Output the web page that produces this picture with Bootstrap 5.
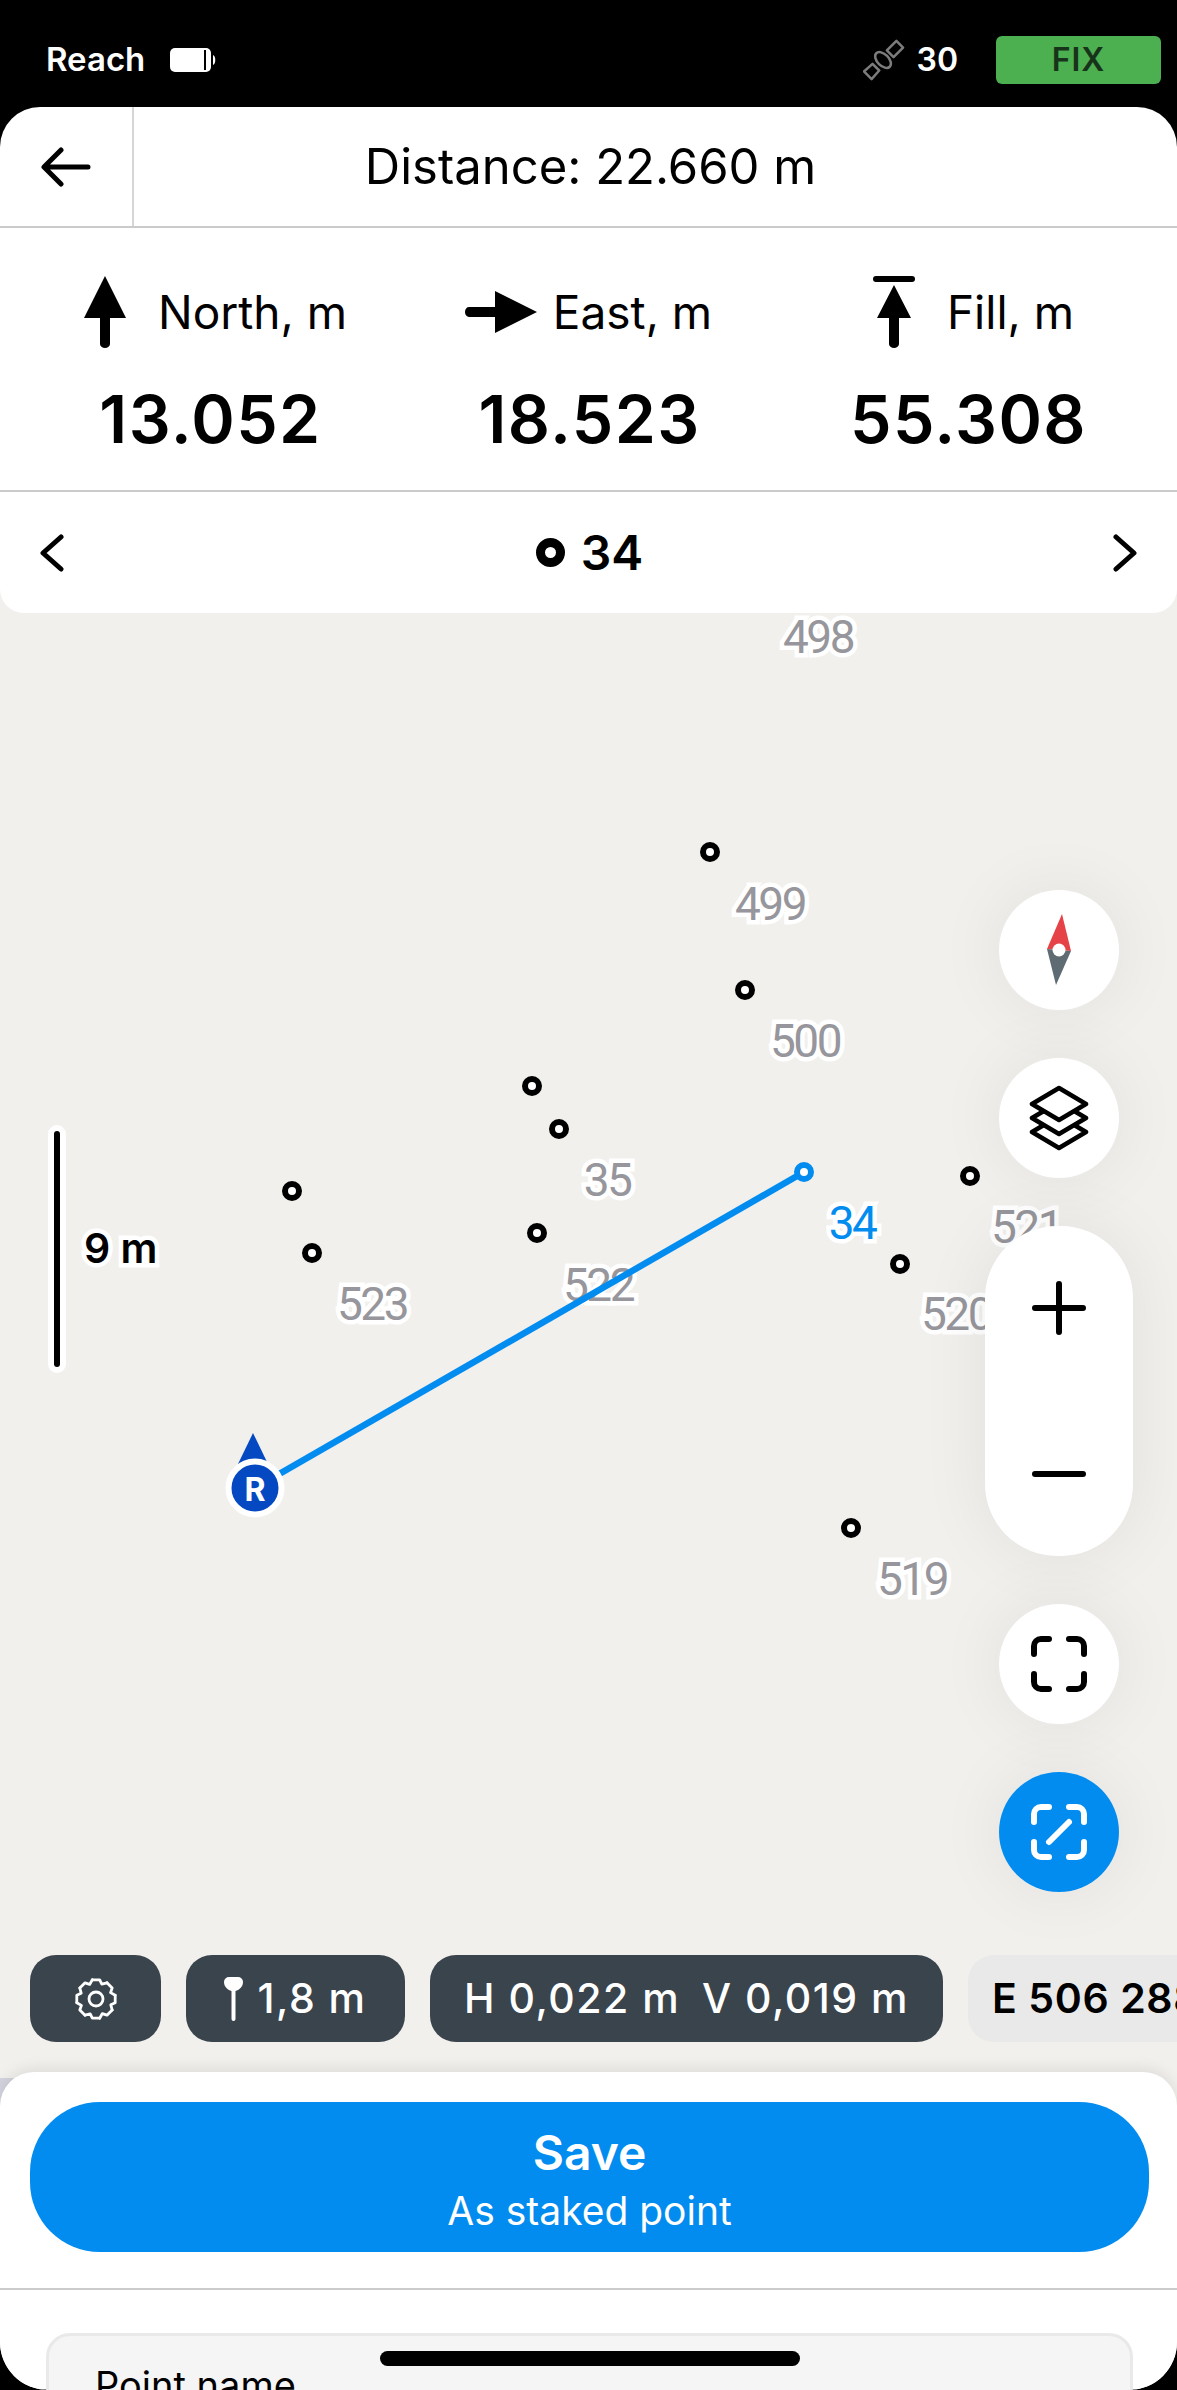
<!DOCTYPE html>
<html lang="en">
<head>
<meta charset="utf-8">
<title>Stakeout</title>
<link href="https://cdn.jsdelivr.net/npm/bootstrap@5.3.0/dist/css/bootstrap.min.css" rel="stylesheet">
<style>
html,body{height:100%;margin:0;background:#000;}
body{font-family:Inter,"Liberation Sans",sans-serif;color:#000;}
.app-screen{width:1177px;height:2390px;overflow:hidden;background:#000;position:relative;border-radius:0 0 48px 48px;}
.status-strip{height:107px;padding:12px 16px 0 46px;color:#fff;font-weight:600;font-size:33px;}
.fix-tag{width:165px;height:48px;background:#4caf50;color:#17331a;border-radius:6px;font-size:32px;font-weight:600;letter-spacing:1px;margin-left:38px;}
.sat-num{margin-left:12px;font-size:32px;}
.batt{margin-left:25px;}
.top-panel{background:#fff;border-radius:40px 40px 24px 24px;position:relative;z-index:3;margin-bottom:-24px;}
.head-row{height:121px;border-bottom:2px solid #cbcbcb;}
.back-cell{width:134px;height:100%;border-right:2px solid #d6d6d6;}
.head-title{font-size:49px;padding-right:130px;}
.stat-row{height:264px;border-bottom:2px solid #cbcbcb;padding:0 20px;}
.stat-label{font-size:46px;height:72px;gap:32px;margin-top:48px;}
.stat-label.tight-gap{gap:16px;}
.stat-label.shift-r{padding-left:12px;}
.stat-value{font-size:66px;font-weight:600;line-height:1;margin-top:38px;letter-spacing:1.4px;padding-left:2px;}
.nav-row{height:121px;padding:0 39px;}
.nav-point{font-size:48px;font-weight:600;gap:16px;padding-left:2px;}
.ring{display:block;width:29px;height:29px;border:9px solid #000;border-radius:50%;}
.map-area{position:relative;height:1801px;background:#f1f0ed;overflow:hidden;}
.pt{position:absolute;width:20px;height:20px;margin:-10px 0 0 -10px;border:6px solid #000;border-radius:50%;background:#fff;}
.pt-blue{border-color:#038cef;}
.lbl{position:absolute;transform:translate(-50%,-50%);font-family:Roboto,sans-serif;font-size:46px;line-height:1;letter-spacing:-2.5px;color:#96969c;-webkit-text-stroke:9px #fff;paint-order:stroke fill;}
.lbl-blue{color:#038cef;}
.r-letter{position:absolute;left:255px;top:901px;transform:translate(-50%,-50%);color:#fff;font-size:32px;font-weight:700;line-height:1;}
.map-svg{position:absolute;left:0;top:0;width:1177px;height:1801px;}
.scale-txt{position:absolute;left:84px;font-size:41px;font-weight:600;line-height:1;-webkit-text-stroke:9px #fff;paint-order:stroke fill;}
.side-tools{position:absolute;right:44px;gap:48px;width:148px;}
.round-tool{width:120px;height:120px;border-radius:50%;background:#fff;box-shadow:0 0 70px rgba(0,0,0,.07);}
.round-tool.active{background:#038cef;}
.zoom-pill{width:148px;height:330px;border-radius:72px;background:#fff;box-shadow:0 0 70px rgba(0,0,0,.07);padding:55px 0;}
.chips{position:absolute;left:30px;gap:25px;white-space:nowrap;}
.chip-box{height:87px;border-radius:26px;background:#3a444c;color:#fff;font-size:41px;font-weight:500;letter-spacing:1.5px;flex:none;}
.chip-light{background:#e9e9e9;color:#000;width:400px;padding-left:24px;font-weight:600;letter-spacing:.6px;}
.back-sheet{position:absolute;left:0;top:1489px;width:40px;height:70px;background:#d3d3de;}
.sheet{position:absolute;left:0;right:0;top:2072px;bottom:0;background:#fff;border-radius:34px 34px 0 0;border-bottom:1px solid #777;box-shadow:0 -4px 14px rgba(0,0,0,.08);z-index:4;}
.save-btn{width:1119px;height:150px;margin:30px 30px 36px;background:#038cef;color:#fff;border:0;border-radius:70px;padding:10px 0 0;}
.save-main{font-size:48px;font-weight:600;display:block;line-height:54px;}
.save-sub{font-size:39px;display:block;line-height:54px;margin-top:4px;}
.sheet-rule{border-top:2px solid #cbcbcb;}
.input-box{margin:43px 44px 0 46px;height:200px;background:#f5f5f5;border:3px solid #e9e9e9;border-radius:24px;padding:27px 46px;font-size:38px;line-height:44px;}
.home-bar{position:absolute;left:380px;top:2351px;width:420px;height:15px;border-radius:8px;background:#000;z-index:5;}
</style>
</head>
<body>
<div class="app-screen">
  <div class="status-strip d-flex align-items-center">
    <span>Reach</span>
    <svg class="batt" width="47" height="26" viewBox="0 0 47 26"><rect x="0" y="1" width="41" height="24" rx="5" fill="#fff"/><rect x="34" y="3" width="2" height="20" fill="#000"/><path d="M43 8c3 1 3 9 0 10z" fill="#fff"/></svg>
    <span class="ms-auto d-flex align-items-center">
      <svg width="42" height="42" viewBox="8 6 44 44" fill="none" stroke="#7c7c7c" stroke-width="2.600" stroke-linejoin="round"><path d="M43 8l7 7-10 10-7-7z"/><path d="M18 32l7 7-8 9-8-8z"/><ellipse cx="29" cy="28" rx="10" ry="6" transform="rotate(45 29 28)"/></svg>
      <span class="sat-num">30</span>
    </span>
    <span class="fix-tag d-flex align-items-center justify-content-center">FIX</span>
  </div>

  <div class="top-panel">
    <div class="head-row d-flex align-items-center">
      <div class="back-cell d-flex align-items-center justify-content-center">
        <svg width="50" height="40" viewBox="0 0 50 40" fill="none" stroke="#000" stroke-width="5" stroke-linecap="round" stroke-linejoin="round"><path d="M47 20H4M20 3L3 20l17 17"/></svg>
      </div>
      <div class="head-title flex-grow-1 text-center">Distance: 22.660 m</div>
    </div>

    <div class="stat-row row g-0">
      <div class="col-4 text-center">
        <div class="stat-label shift-r d-flex align-items-center justify-content-center">
          <svg width="42" height="72" viewBox="0 0 42 72"><path d="M21 0L42 42H26V68a5 4 0 0 1-10 0V42H0z" fill="#000"/></svg>
          <span>North, m</span>
        </div>
        <div class="stat-value">13.052</div>
      </div>
      <div class="col-4 text-center">
        <div class="stat-label tight-gap d-flex align-items-center justify-content-center">
          <svg width="72" height="42" viewBox="0 0 72 42"><path d="M72 21L30 42V26H4a4 5 0 0 1 0-10H30V0z" fill="#000"/></svg>
          <span>East, m</span>
        </div>
        <div class="stat-value">18.523</div>
      </div>
      <div class="col-4 text-center">
        <div class="stat-label shift-r d-flex align-items-center justify-content-center">
          <svg width="42" height="72" viewBox="0 0 42 72"><rect x="0" y="0" width="42" height="6" rx="3" fill="#000"/><path d="M21 9L38 42H26V68a5 4 0 0 1-10 0V42H4z" fill="#000"/></svg>
          <span>Fill, m</span>
        </div>
        <div class="stat-value">55.308</div>
      </div>
    </div>

    <div class="nav-row d-flex align-items-center justify-content-between">
      <svg width="26" height="38" viewBox="0 0 26 38" fill="none" stroke="#000" stroke-width="5" stroke-linecap="round" stroke-linejoin="round"><path d="M22 3L4 19l18 16"/></svg>
      <div class="nav-point d-flex align-items-center"><span class="ring"></span><span>34</span></div>
      <svg width="26" height="38" viewBox="0 0 26 38" fill="none" stroke="#000" stroke-width="5" stroke-linecap="round" stroke-linejoin="round"><path d="M4 3l18 16L4 35"/></svg>
    </div>
  </div>

  <div class="map-area">
    <div class="back-sheet"></div>
    <svg class="map-svg" viewBox="0 589 1177 1801">
      <rect x="48" y="1125" width="18" height="248" rx="9" fill="#fff"/>
      <rect x="54" y="1131" width="6" height="236" rx="3" fill="#000"/>
    </svg>
    <span class="scale-txt" style="top:639px">9 m</span>
    <span class="lbl" style="left:818px;top:48px">498</span>
    <span class="lbl" style="left:770px;top:315px">499</span>
    <span class="lbl" style="left:805px;top:452px">500</span>
    <span class="lbl" style="left:607px;top:591px">35</span>
    <span class="lbl lbl-blue" style="left:852px;top:634px">34</span>
    <span class="lbl" style="left:598px;top:696px">522</span>
    <span class="lbl" style="left:372px;top:715px">523</span>
    <span class="lbl" style="left:1026px;top:638px">521</span>
    <span class="lbl" style="left:956px;top:725px">520</span>
    <span class="lbl" style="left:912px;top:990px">519</span>
    <svg class="map-svg" viewBox="0 589 1177 1801">
      <path d="M255 1488L804 1172" stroke="#038cef" stroke-width="6.500" fill="none"/>
      <path d="M253 1433L268 1464 238 1464z" fill="#0449c2"/>
      <circle cx="255" cy="1488" r="26.500" fill="#0449c2" stroke="#fff" stroke-width="6"/>
    </svg>
    <span class="pt" style="left:710px;top:263px"></span>
    <span class="pt" style="left:745px;top:401px"></span>
    <span class="pt" style="left:532px;top:497px"></span>
    <span class="pt" style="left:559px;top:540px"></span>
    <span class="pt" style="left:537px;top:644px"></span>
    <span class="pt" style="left:292px;top:602px"></span>
    <span class="pt" style="left:312px;top:664px"></span>
    <span class="pt" style="left:970px;top:587px"></span>
    <span class="pt" style="left:900px;top:675px"></span>
    <span class="pt" style="left:851px;top:939px"></span>
    <span class="pt pt-blue" style="left:804px;top:583px"></span>
    <span class="r-letter">R</span>

    <div class="side-tools d-flex flex-column align-items-center" style="top:301px">
      <div class="round-tool d-flex align-items-center justify-content-center">
        <svg width="120" height="120" viewBox="0 0 120 120"><path d="M63 24L72 61 48 59z" fill="#e54347"/><path d="M48 59L72 61 57 95z" fill="#5f6b73"/><circle cx="60" cy="60" r="6.500" fill="#fff"/></svg>
      </div>
      <div class="round-tool d-flex align-items-center justify-content-center">
        <svg width="60" height="66" viewBox="0 0 60 66" fill="#fff" stroke="#000" stroke-width="4.500" stroke-linejoin="round"><path d="M30 31L3 47l27 16 27-16z"/><path d="M30 17L3 33l27 16 27-16z"/><path d="M30 3L3 19l27 16 27-16z"/></svg>
      </div>
      <div class="zoom-pill d-flex flex-column align-items-center justify-content-between">
        <svg width="54" height="54" viewBox="0 0 54 54" stroke="#000" stroke-width="6" stroke-linecap="round"><path d="M27 3v48M3 27h48"/></svg>
        <svg width="54" height="54" viewBox="0 0 54 54" stroke="#000" stroke-width="6" stroke-linecap="round"><path d="M3 27h48"/></svg>
      </div>
      <div class="round-tool d-flex align-items-center justify-content-center">
        <svg width="56" height="56" viewBox="0 0 56 56" fill="none" stroke="#000" stroke-width="6" stroke-linecap="round"><path d="M3 18V10a7 7 0 0 1 7-7h8M38 3h8a7 7 0 0 1 7 7v8M53 38v8a7 7 0 0 1-7 7h-8M18 53h-8a7 7 0 0 1-7-7v-8"/></svg>
      </div>
      <div class="round-tool active d-flex align-items-center justify-content-center">
        <svg width="56" height="56" viewBox="0 0 56 56" fill="none" stroke="#fff" stroke-width="6" stroke-linecap="round"><path d="M3 18V10a7 7 0 0 1 7-7h8M38 3h8a7 7 0 0 1 7 7v8M53 38v8a7 7 0 0 1-7 7h-8M18 53h-8a7 7 0 0 1-7-7v-8M18 38l20-20"/></svg>
      </div>
    </div>

    <div class="chips d-flex" style="top:1366px">
      <div class="chip-box d-flex align-items-center justify-content-center" style="width:131px">
        <svg width="44" height="44" viewBox="-22 -22 44 44" fill="none" stroke="#fff" stroke-width="2.800" stroke-linejoin="round" stroke-linecap="round">
          <circle r="7"/>
          <path id="gear-seg" d="M-3.700-19.200H3.700L5.800-14.800 11-16.200"/>
          <use href="#gear-seg" transform="rotate(45)"/>
          <use href="#gear-seg" transform="rotate(90)"/>
          <use href="#gear-seg" transform="rotate(135)"/>
          <use href="#gear-seg" transform="rotate(180)"/>
          <use href="#gear-seg" transform="rotate(225)"/>
          <use href="#gear-seg" transform="rotate(270)"/>
          <use href="#gear-seg" transform="rotate(315)"/>
        </svg>
      </div>
      <div class="chip-box d-flex align-items-center justify-content-center" style="width:219px;gap:14px">
        <svg width="19" height="44" viewBox="0 0 19 44"><path d="M5 0h9a5 5 0 0 1 5 5c0 5-4 8-7.500 9v28a2 2 0 0 1-4 0V14C4 13 0 10 0 5a5 5 0 0 1 5-5z" fill="#fff"/></svg>
        <span>1,8 m</span>
      </div>
      <div class="chip-box d-flex align-items-center justify-content-center" style="width:513px;gap:22px">
        <span>H 0,022 m</span><span>V 0,019 m</span>
      </div>
      <div class="chip-box chip-light d-flex align-items-center">E 506 288,112 m</div>
    </div>
  </div>

  <div class="sheet">
    <button type="button" class="save-btn d-block">
      <span class="save-main">Save</span>
      <span class="save-sub">As staked point</span>
    </button>
    <div class="sheet-rule"></div>
    <div class="input-box">Point name</div>
  </div>
  <div class="home-bar"></div>
</div>
<script src="https://cdn.jsdelivr.net/npm/bootstrap@5.3.0/dist/js/bootstrap.bundle.min.js"></script>
</body>
</html>
